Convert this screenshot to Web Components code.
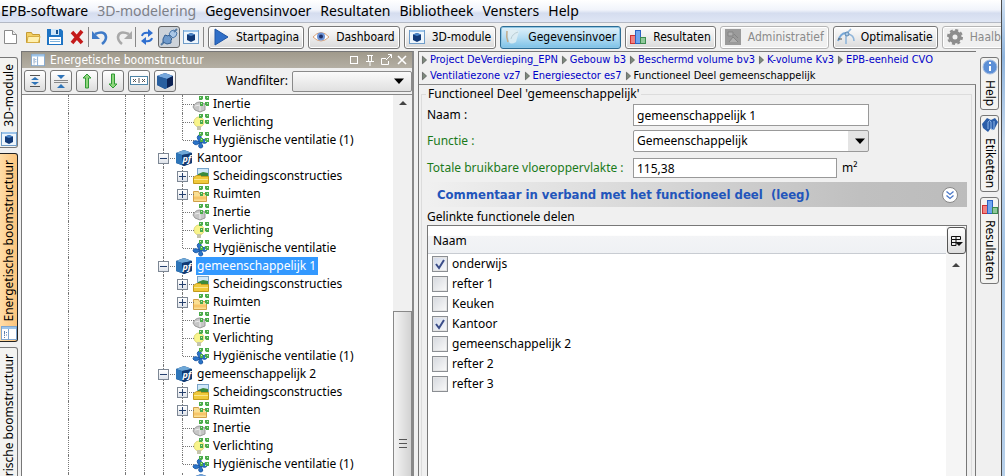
<!DOCTYPE html>
<html lang="nl">
<head>
<meta charset="utf-8">
<title>EPB-software</title>
<style>
html, body { margin: 0; height: 100%; overflow: hidden; }
body { --ui: "DejaVu Sans Condensed", "Noto Sans", sans-serif; font: 12px/16px "Noto Sans", sans-serif; color: #000; background: #f0f0f0; }
</style>
</head>
<body>
<epb-app></epb-app>
<script>
const ICONS = {
  cube: `<path d="M8 0L16 3V12L8 16L0 12V3z" fill="#1c4a8e"/><path d="M8 0L16 3L10 6L0 3z" fill="#76a7dc"/><path d="M0 3L10 6V15L8 16L0 12z" fill="#295f9f"/><path d="M10 6L16 3V12L10 15z" fill="#0c2254"/>`,
  pf: `<path d="M8 0L16 3V13L8 16L0 13V3z" fill="#174a86"/><path d="M8 0L16 3L6 5L0 3z" fill="#6ea8d8"/><path d="M0 3L6 5V15L0 13z" fill="#2e75b8"/><path d="M6 5L16 3V13L8 16L6 15z" fill="#123a72"/><text x="6.500" y="12" font-family="Noto Sans,sans-serif" font-size="9" font-weight="bold" font-style="italic" fill="#fff">pf</text>`,
  screen: `<rect x=".5" y="1.500" width="15" height="13" fill="#eef6fd" stroke="#6f9cc8"/><path d="M1 2h14" stroke="#9cc4ea" stroke-width="2"/><path d="M8 4L12 5.500V11L8 13L4 11V5.500z" fill="#123a78"/><path d="M8 4L12 5.500L8 7L4 5.500z" fill="#4c86c8"/>`,
  page: `<path d="M1.500 1.500h8l4 4v9h-12z" fill="#fff" stroke="#8a8a8a"/><path d="M9.500 1.500v4h4" fill="#eee" stroke="#8a8a8a"/>`,
  folder: `<path d="M1.500 13.500v-10h5l1 2h7v8z" fill="#f3cf62" stroke="#c49a33"/><path d="M3 7.500h12l-1.500 6H2z" fill="#fff0ae" stroke="#d7ae45"/>`,
  save: `<path d="M0 0h14l2 2v14H0z" fill="#1e74c4"/><rect x="4" y="0" width="8" height="6" fill="#cfe6f8"/><rect x="9" y="1" width="2" height="4" fill="#14508e"/><rect x="2" y="8" width="12" height="7" fill="#fff"/><path d="M3 10.500h10M3 12.500h10" stroke="#7fb3dd"/>`,
  del: `<path d="M3 3L13 14M13 2L3 14" stroke="#c41a1a" stroke-width="3.600"/>`,
  undo: `<path d="M3 5q10-4 11 3q0 4-4 7" fill="none" stroke="#3f7bc8" stroke-width="2.600"/><path d="M0 2v8h8z" fill="#3f7bc8"/>`,
  redo: `<path d="M13 5q-10-4-11 3q0 4 4 7" fill="none" stroke="#a9a9a9" stroke-width="2.600"/><path d="M16 2v8h-8z" fill="#a9a9a9"/>`,
  sync: `<path d="M3 7q1-4 7-3" fill="none" stroke="#2f6fd0" stroke-width="2"/><path d="M9 0l5 4-5 4z" fill="#2f6fd0"/><path d="M13 9q-1 4-7 3" fill="none" stroke="#2f6fd0" stroke-width="2"/><path d="M7 8l-5 4 5 4z" fill="#2f6fd0"/>`,
  plug: `<path d="M0 16L4 12" stroke="#567da8" stroke-width="2"/><path d="M2 10l2-4 3 1 1-1 3 4-1 1 0 3-4 1-4-2z" fill="#6f9acb" stroke="#345f92"/><path d="M8 5l2-3 3-1 3 3-1 3-3 2z" fill="#a9c6e6" stroke="#4a77aa"/><path d="M13 3l3-3" stroke="#567da8" stroke-width="2"/>`,
  play: `<path d="M2 0L15 8L2 16z" fill="#2f6fc8" stroke="#1f55a4"/>`,
  eye: `<path d="M0 8q8-9 16 0q-8 8-16 0z" fill="#fff" stroke="#d9a37a"/><circle cx="8" cy="7.500" r="4" fill="#6c93d6"/><circle cx="8" cy="7.500" r="2" fill="#1e2f66"/>`,
  pen: `<path d="M2 1q6-1 12 1l-3 11q-5 3-7 0z" fill="#e4eff2" opacity=".8"/><path d="M2 2q-1 6 1 11" fill="none" stroke="#c2ab8a" stroke-width="1.500"/><path d="M6 10q1-5 7-7" fill="none" stroke="#b9cdd4"/>`,
  bars: `<rect x=".5" y="6.500" width="5" height="8" fill="#f08080" stroke="#cc3333"/><rect x="5.500" y="1.500" width="5" height="13" fill="#6ea6f0" stroke="#2a62c4"/><rect x="10.500" y="8.500" width="5" height="6" fill="#8fc99a" stroke="#3b8a4e"/>`,
  admin: `<path d="M0 0h16v16H0z" fill="#9a9a9a"/><path d="M3 3h5v4H3zM9 5l4 4M4 13l4-5 5 5" fill="#b0b0b0" stroke="#858585"/>`,
  opt: `<path d="M0 12q3-9 9-8" fill="none" stroke="#77a8d8" stroke-width="2"/><path d="M8 15V5l5-5M10 5q6 1 6 7" fill="none" stroke="#90b6da" stroke-width="1.600"/><circle cx="9" cy="5" r="2" fill="#a9c9e6" stroke="#5d87b0"/><path d="M0 10h4" stroke="#555"/>`,
  gear: `<circle cx="8" cy="8" r="4.500" fill="none" stroke="#8d8d8d" stroke-width="4"/><circle cx="8" cy="8" r="7" fill="none" stroke="#8d8d8d" stroke-width="2" stroke-dasharray="3 2.500"/>`,
  panel: `<rect x=".5" y="1.500" width="15" height="13" fill="#fff" stroke="#7fa6cf"/><path d="M1 3h14" stroke="#9cc4ea" stroke-width="2"/><path d="M7.500 4v10" stroke="#7fa6cf"/><path d="M3.500 6v7M3 7.500h3M3 10h3" stroke="#5a7fae" stroke-dasharray="1 1"/>`,
  expand: `<path d="M3 2.500h10M3 13.500h10" stroke="#555"/><path d="M8 4l4 3H4zM8 12l4-3H4z" fill="#2f74b8"/>`,
  collapse: `<path d="M1 7.500h14M1 9.500h14" stroke="#888"/><path d="M4 2h8L8 6zM4 15h8l-4-4z" fill="#2f74b8"/>`,
  up: `<path d="M8 1l4 4H9.500v10h-3V5H4z" fill="#8ed67c" stroke="#2f9a35"/>`,
  down: `<path d="M8 15l4-4H9.500V1h-3v10H4z" fill="#8ed67c" stroke="#2f9a35"/>`,
  rename: `<rect x="-.5" y="3.500" width="17" height="8" fill="#fff" stroke="#4d84a6"/><path d="M2 6l3 3M5 6L2 9M8 5v5M11 6l3 3M14 6l-3 3" stroke="#555"/>`,
  info: `<circle cx="8" cy="8" r="7" fill="#5c8fd6" stroke="#a5bde0"/><path d="M8 7v5M8 3v2" stroke="#fff" stroke-width="2"/>`,
  label: `<path d="M0 7l5-6 4 2v8l-3 4-5-4zM9 3l4-2 3 4-4 8-4-2z" fill="#2a5da8"/><path d="M6 12V5q2-3 3 0v7q3 2 3-2V4" fill="none" stroke="#8db6e8"/>`,
  max: `<rect x="4.500" y="4.500" width="7" height="7" fill="none" stroke="#fff"/>`,
  pin: `<path d="M5 3.500h6M6.500 4v5M9.500 4v5M4 9.500h8M8 10v4" fill="none" stroke="#fff"/>`,
  float: `<path d="M8 6.500H3.500v6h7V9M8 8l5-5M10 2.500h3.500V6" fill="none" stroke="#fff"/>`,
  close: `<path d="M4 4l8 8M12 4l-8 8" stroke="#fff" stroke-width="1.600"/>`,
  arrow: `<path d="M3 5.500h10L8 11z" fill="#000"/>`,
  scrollup: `<path d="M4 10h8L8 6z" fill="#444"/>`,
  crumb: `<path d="M5 2.500v11l6-5.500z" fill="#7c8a7c" stroke="#4d4d4d"/>`,
  chevrons: `<circle cx="8" cy="8" r="7.500" fill="#fff" stroke="#888"/><path d="M4.500 4.500L8 7.500l3.500-3M4.500 8.500L8 11.500l3.500-3" fill="none" stroke="#4a78c8" stroke-width="1.300"/>`,
  columns: `<path d="M3.500 3.500h9v3h-9zM3.500 6.500v6H8M8 3.500v9M4 9.500h4" fill="none" stroke="#111"/><path d="M7 9h8l-4 4z" fill="#111"/>`,
  scheiding: `<rect x="4.500" y=".5" width="11" height="11" fill="#cfe7f8" stroke="#7aa4c8"/><path d="M5 6l5-2 5 1v4H5z" fill="#3b8a3b"/><path d="M.500 15.500v-6l3-2h4l1 1h7v7z" fill="#f0c93a" stroke="#c29a1c"/><path d="M1 11.500h14" stroke="#fbe68c"/>`,
  ruimten: `<path d="M.500 15.500v-10h5l1 2h7v8z" fill="#fbdf92" stroke="#d0a04a"/><path d="M1 12h12" stroke="#f6c56a" stroke-width="3"/>`,
  inertie: `<path d="M0 11q2-5 7-5l5 2v6l-5 2-5-2z" fill="#c6c6c6" stroke="#9a9a9a"/><path d="M2 10l5-1v6" fill="none" stroke="#ececec"/>`,
  licht: `<circle cx="6" cy="8" r="5" fill="#f8f48a" stroke="#e0d878"/><rect x="4" y="12" width="4" height="4" fill="#c4c4ac"/>`,
  vent: `<circle cx="7" cy="10" r="2" fill="#1f5ba8"/><path d="M7 10q-5-5-1-7q4 1 1 7q5-5 7-1q0 4-7 1q5 5 1 6q-4 0-1-6q-4 5-7 1q0-4 7-1" fill="#2a74c8" stroke="#1f5ba8"/>`
};
const LEAF = `<path d="M6 0h4v4H6zM12 0h4v4h-4zM7 6h3v4H7zM12 6h4v4h-4z" fill="#4bab4b"/><path d="M7 1h1v1H7zM14 1h1v1h-1zM14 7h1v1h-1zM8 7h1v1H8zM9 3h1v1H9zM12 3h1v1h-1zM12 9h1v1h-1z" fill="#c4ecc0"/>`;
for (const n of ['ruimten', 'inertie', 'licht', 'vent']) ICONS[n] += LEAF;

function define(name, html) {
  customElements.define(name, class extends HTMLElement {
    constructor() {
      super();
      this.attachShadow({ mode: 'open' });
    }
    connectedCallback() {
      this.shadowRoot.innerHTML = typeof html === 'function' ? html(this) : html;
    }
  });
}

define('ui-icon', el => `<style>:host{display:inline-block;flex:none;width:16px;height:16px}svg{display:block;width:100%;height:100%;overflow:visible}</style>
<svg viewBox="0 0 16 16" aria-hidden="true">${ICONS[el.getAttribute('name')] || ''}</svg>`);

define('menu-bar', `<style>
:host{display:block;font-size:14px;line-height:22px;background:linear-gradient(#fff,#f1f4fb 45%,#d5ddef 60%,#dfe6f5);border-bottom:1px solid #b4b9c4}
nav{display:flex;gap:9px;padding:0 1px;white-space:nowrap}
button{all:unset}button:disabled{color:#7d8088}
</style><nav><button>EPB-software</button><button disabled>3D-modelering</button><button>Gegevensinvoer</button><button>Resultaten</button><button>Bibliotheek</button><button>Vensters</button><button>Help</button></nav>`);

define('icon-button', el => `<style>
:host{display:block;flex:none}
button{display:flex;align-items:center;justify-content:center;box-sizing:border-box;width:22px;height:22px;padding:0;border:0;background:none}
:host([boxed]) button{border:1px solid #777;border-radius:3px;background:linear-gradient(#fff,#eee 50%,#dcdcdc)}
:host([pressed]) button{border:1px solid #666;border-radius:3px;background:#cdd3da}
</style><button aria-label="${el.getAttribute('label')}"><ui-icon name="${el.getAttribute('icon')}"></ui-icon></button>`);

define('module-button', el => `<style>
:host{display:block;flex:none}
button{display:flex;align-items:center;gap:7px;box-sizing:border-box;height:23px;padding:0 4px;font:12px/16px var(--ui);color:#000;white-space:nowrap;border:1px solid #777;border-radius:3px;background:linear-gradient(#fcfcfc,#ececec 50%,#dadada);box-shadow:inset 0 0 0 1px #fff}
:host([active]) button{border-color:#2c6c94;background:linear-gradient(#e0f1fa,#b4dcf2 50%,#7cc2e8);box-shadow:inset 0 0 0 1px #8fc6e4}
button:disabled{color:#8a8a8a;border-color:#b5b5b5;background:#f0f0f0}
</style><button ${el.hasAttribute('disabled') ? 'disabled' : ''}><ui-icon name="${el.getAttribute('icon')}"></ui-icon><slot></slot></button>`);

define('tool-strip', `<style>
:host{display:flex;align-items:center;height:28px;gap:4px;overflow:hidden;background:#f0f0f0}
.tools{display:flex;flex:none;align-items:center}
.sep{width:1px;height:20px;background:#888}
.wide{margin-right:2px}
.last{margin-left:1px}
</style><div class="tools">
<icon-button icon="page" label="Nieuw"></icon-button><icon-button icon="folder" label="Openen"></icon-button><icon-button icon="save" label="Bewaren"></icon-button><icon-button icon="del" label="Verwijderen"></icon-button><span class="sep"></span>
<icon-button class="wide" icon="undo" label="Ongedaan maken"></icon-button><icon-button icon="redo" label="Opnieuw"></icon-button><span class="sep"></span>
<icon-button icon="sync" label="Vernieuwen"></icon-button><icon-button icon="plug" pressed label="Koppeling"></icon-button><icon-button icon="screen" label="3D-venster"></icon-button><span class="sep last"></span></div>
<module-button icon="play">Startpagina</module-button><module-button icon="eye">Dashboard</module-button><module-button icon="screen">3D-module</module-button><module-button icon="pen" active>Gegevensinvoer</module-button><module-button icon="bars">Resultaten</module-button><module-button icon="admin" disabled>Administratief</module-button><module-button icon="opt">Optimalisatie</module-button><module-button icon="gear" disabled>Haalbaarheid</module-button>`);

define('side-tab', el => `<style>
:host{display:block;flex:none}
button{display:flex;flex-direction:column;align-items:center;gap:5px;box-sizing:border-box;width:19px;padding:1px 0 3px;font:inherit;line-height:16px;color:#000;border:1px solid #777;border-radius:3px;background:#f3f3f1;white-space:nowrap}
span{writing-mode:vertical-rl}
:host([left]) button{width:18px;border-left:0;border-radius:0 3px 3px 0;padding:6px 0 0;gap:4px}
:host([left]) span{transform:rotate(180deg)}
:host([left]) ui-icon{order:1}
:host([active]) button{background:linear-gradient(90deg,#ffdca6,#fbc47c);border-color:#222}
</style><button><ui-icon name="${el.getAttribute('icon')}"></ui-icon><span><slot></slot></span></button>`);

define('tree-row', el => {
  const kind = el.getAttribute('kind'), branch = el.getAttribute('toggle'), node = kind === 'pf';
  const line = '<i class="v"></i>', gap = '<i></i>';
  const sign = branch ? `<button aria-label="${branch === '+' ? 'Uitvouwen' : 'Invouwen'}"><svg viewBox="0 0 9 9"><path d="M1 4.500h7${branch === '+' ? 'M4.500 1v7' : ''}" stroke="#25406e" fill="none"/></svg></button>` : '';
  const join = `<i class="v h${el.hasAttribute('last') ? ' end' : ''}">${sign}</i>`;
  return `<style>
:host{display:flex;align-items:center;height:18px;white-space:nowrap}
i{position:relative;flex:none;width:19px;height:18px;display:flex;align-items:center;justify-content:center}
.v::before{content:"";position:absolute;left:9px;top:0;bottom:0;border-left:1px dotted #777}
.end::before{bottom:9px}
.h::after{content:"";position:absolute;left:10px;right:-2px;top:9px;border-top:1px dotted #777}
i button{position:relative;z-index:1;box-sizing:border-box;width:11px;height:11px;padding:0;border:1px solid #7d8794;background:linear-gradient(#fff,#dfe3ea)}
svg{display:block;width:9px;height:9px}
ui-icon{margin:0 ${node ? 4 : 3}px 0 ${node ? 3 : 1}px}
span{padding:0 2px 0 1px;line-height:18px}
:host([selected]) span{background:#3399ff;color:#fff}
</style>${line}${gap}${gap}${line}${line}${node ? join : line + join}<ui-icon name="${kind}"></ui-icon><span><slot></slot></span>`;
});

define('tree-panel', () => {
  const tail = suffix => `<tree-row kind="inertie">Inertie</tree-row><tree-row kind="licht">Verlichting</tree-row><tree-row kind="vent" last>Hygiënische ventilatie${suffix}</tree-row>`;
  const kids = suffix => `<tree-row kind="scheiding" toggle="+">Scheidingsconstructies</tree-row><tree-row kind="ruimten" toggle="+">Ruimten</tree-row>` + tail(suffix);
  return `<style>
:host{display:flex;flex-direction:column;box-sizing:border-box;min-height:0;border:1px solid #777;border-bottom:0;border-right:2px solid #888;background:#f0f0f0}
header{display:flex;align-items:center;height:16px;padding:0 2px 0 8px;color:#fff;background:linear-gradient(#a09a8c,#b4afa4)}
h2{flex:1;margin:0 0 0 4px;font:12px/16px var(--ui)}
header ui-icon{height:14px}
header icon-button{width:16px;display:flex;justify-content:center}
.bar{display:flex;align-items:center;gap:4px;height:26px;padding-left:2px;border-bottom:1px solid #888}
label{margin-left:auto}
.combo{position:relative;display:flex;width:120px}
select{appearance:none;box-sizing:border-box;width:100%;height:21px;border:1px solid #8a8a8a;border-radius:2px;background:linear-gradient(#fafafa,#e0e0e0)}
.combo ui-icon{position:absolute;right:5px;top:2px;pointer-events:none}
.body{flex:1;display:flex;min-height:0;background:#fff}
.tree{flex:1;overflow:hidden;padding-left:37px}
.scroll{display:flex;flex-direction:column;width:19px;background:#f0f0f0}
.scroll ui-icon{align-self:center}
.thumb{display:flex;flex:1;justify-content:center;align-items:center;margin-top:200px;box-sizing:border-box;border:1px solid #888;border-bottom:0;background:linear-gradient(90deg,#f4f4f4,#d2d2d2)}
.thumb::before{content:"";width:8px;height:9px;margin-top:98px;background:repeating-linear-gradient(#555 0 1px,transparent 1px 4px)}
</style><header><ui-icon name="panel"></ui-icon><h2>Energetische boomstructuur</h2><icon-button icon="max" label="Maximaliseren"></icon-button><icon-button icon="pin" label="Vastzetten"></icon-button><icon-button icon="float" label="Losmaken"></icon-button><icon-button icon="close" label="Sluiten"></icon-button></header>
<div class="bar"><icon-button boxed icon="expand" label="Uitvouwen"></icon-button><icon-button boxed icon="collapse" label="Invouwen"></icon-button><icon-button boxed icon="up" label="Omhoog"></icon-button><icon-button boxed icon="down" label="Omlaag"></icon-button><icon-button boxed icon="rename" label="Hernoemen"></icon-button><icon-button boxed icon="cube" label="3D"></icon-button>
<label for="wand">Wandfilter:</label><div class="combo"><select id="wand"><option></option></select><ui-icon name="arrow"></ui-icon></div></div>
<div class="body"><div class="tree">${tail(' (1)')}
<tree-row kind="pf" toggle="-">Kantoor</tree-row>${kids('')}
<tree-row kind="pf" toggle="-" selected>gemeenschappelijk 1</tree-row>${kids(' (1)')}
<tree-row kind="pf" toggle="-">gemeenschappelijk 2</tree-row>${kids(' (1)')}
<tree-row kind="cube" toggle="-"></tree-row></div>
<div class="scroll"><ui-icon name="scrollup"></ui-icon><div class="thumb"></div></div></div>`;
});

define('crumb-trail', `<style>
:host{display:block;border-bottom:1px solid #888;font:11px/16px var(--ui)}
ol{display:flex;flex-wrap:wrap;margin:0;padding:0;list-style:none}
li{display:flex;align-items:center;margin-right:1px;white-space:nowrap}
ui-icon{width:11px;height:16px}
a{color:#0000c8;text-decoration:none}
.brk{flex-basis:100%;height:0;margin:0}
</style><ol><li><ui-icon name="crumb"></ui-icon><a href="#">Project DeVerdieping_EPN</a></li><li><ui-icon name="crumb"></ui-icon><a href="#">Gebouw b3</a></li><li><ui-icon name="crumb"></ui-icon><a href="#">Beschermd volume bv3</a></li><li><ui-icon name="crumb"></ui-icon><a href="#">K-volume Kv3</a></li><li><ui-icon name="crumb"></ui-icon><a href="#">EPB-eenheid CVO</a></li><li class="brk"></li><li><ui-icon name="crumb"></ui-icon><a href="#">Ventilatiezone vz7</a></li><li><ui-icon name="crumb"></ui-icon><a href="#">Energiesector es7</a></li><li><ui-icon name="crumb"></ui-icon>Functioneel Deel gemeenschappelijk</li></ol>`);

define('linked-parts', () => {
  const parts = [['onderwijs', 1], ['refter 1'], ['Keuken'], ['Kantoor', 1], ['gemeenschappelijk 2'], ['refter 2'], ['refter 3']];
  return `<style>
:host{display:flex;min-height:0;border:1px solid #777;border-bottom:0;background:#fff}
table{flex:1;align-self:flex-start;display:table;border-collapse:collapse}
th{box-sizing:border-box;height:27px;padding:4px 5px 0;text-align:left;font-weight:normal;border-bottom:1px solid #c8ccd2;background:linear-gradient(#fff 35%,#f3f4f6 36%,#eff1f4)}
td{height:20px;padding:0 4px}
label{display:flex;align-items:center;gap:4px;height:20px}
input{appearance:none;flex:none;box-sizing:border-box;width:16px;height:16px;margin:0;border:1px solid #8b8e93;outline:1px solid #e4e4e4;outline-offset:-2px;background:linear-gradient(135deg,#d5d8de,#fafafa)}
input:checked{background:no-repeat center/12px url("data:image/svg+xml,%3Csvg xmlns='http://www.w3.org/2000/svg' viewBox='0 0 12 12'%3E%3Cpath d='M2 6l3 4 5-8' fill='none' stroke='%233b4d88' stroke-width='2'/%3E%3C/svg%3E"),linear-gradient(135deg,#d0d8ea,#fafafa)}
aside{display:flex;flex-direction:column;align-items:center;width:20px;background:#f5f5f5}
button{box-sizing:border-box;width:19px;height:27px;margin-top:1px;padding:0;border:1px solid #555;border-radius:3px;background:linear-gradient(#fff,#ddd)}
button ui-icon{display:block}
aside > ui-icon{margin-top:3px}
</style><table><thead><tr><th scope="col">Naam</th></tr></thead><tbody>${parts.map(([n, on], i) => `<tr><td><label for="p${i}"><input type="checkbox" id="p${i}" ${on ? 'checked' : ''}>${n}</label></td></tr>`).join('')}</tbody></table>
<aside><button aria-label="Kolommen"><ui-icon name="columns"></ui-icon></button><ui-icon name="scrollup"></ui-icon></aside>`;
});

define('part-form', `<style>
:host{display:flex;flex-direction:column;box-sizing:border-box;min-width:0;border:1px solid #777;border-bottom:0;border-right:0;background:#f0f0f0}
.area{flex:1;display:flex;min-height:0;padding:1px 3px 0 2px;border-right:1px solid #777}
fieldset{flex:1;display:flex;flex-direction:column;min-width:0;margin:0;padding:2px 4px 0 5px;border:1px solid #dcdcdc;border-bottom:0}
legend{padding:0 2px;margin-left:-1px;line-height:16px}
.grid{display:grid;grid-template-columns:206px 236px 1fr;row-gap:4px;align-items:center}
.green{color:#1a7a1a}
.combo{position:relative;display:flex}
input,select{appearance:none;box-sizing:border-box;width:100%;height:22px;margin:0;padding:0 3px;font:inherit;color:#000;border:1px solid #999;border-radius:0;background:#fff}
select{border-radius:2px;background:linear-gradient(90deg,transparent calc(100% - 20px),#e4e4e4 0),#fff}
.combo ui-icon{position:absolute;right:1px;top:3px;pointer-events:none}
.area-row{display:flex;align-items:center;gap:5px;grid-column:2 / 4;height:24px}
.area-row input{width:204px;height:20px}
.comment{display:flex;align-items:center;justify-content:space-between;height:25px;margin-top:2px;padding:0 9px 0 10px;color:#2255bb;background:linear-gradient(90deg,#f0f0f0,#c0c0c0 80%,#bcbcbc)}
h3{margin:0;font:bold 13px/16px var(--ui);white-space:pre}
.sub{margin:2px 0 0;line-height:16px}
linked-parts{flex:1}
</style><crumb-trail></crumb-trail><div class="area"><fieldset><legend>Functioneel Deel 'gemeenschappelijk'</legend>
<div class="grid"><label for="naam">Naam :</label><input id="naam" value="gemeenschappelijk 1"><span></span>
<label for="functie" class="green">Functie :</label><div class="combo"><select id="functie"><option>Gemeenschappelijk</option></select><ui-icon name="arrow"></ui-icon></div><span></span>
<label for="opp" class="green">Totale bruikbare vloeroppervlakte :</label><div class="area-row"><input id="opp" value="115,38"><span>m²</span></div></div>
<div class="comment"><h3>Commentaar in verband met het functioneel deel  (leeg)</h3><ui-icon name="chevrons"></ui-icon></div>
<p class="sub">Gelinkte functionele delen</p><linked-parts></linked-parts></fieldset></div>`);

define('epb-app', `<style>
:host{display:flex;height:100vh;overflow:hidden}
.window{flex:1;display:flex;flex-direction:column;min-width:0}
.edge{width:4px;border-left:1px solid #4d4d4d;box-sizing:border-box;background:linear-gradient(#cfe0f2,#8fb4dc 12%,#c6d9ee 30%,#9dbfe2 55%,#b7d0ea)}
.work{flex:1;display:flex;min-height:0}
tree-panel{flex:0 0 393px}
part-form{flex:1;margin-left:4px}
.rail{display:flex;flex-direction:column;gap:5px;flex:none;width:21px;padding-top:6px;box-sizing:border-box;overflow:hidden}
.right{width:25px;padding-left:4px}
</style><div class="window"><menu-bar></menu-bar><tool-strip></tool-strip><div class="work">
<div class="rail"><side-tab left icon="screen">3D-module</side-tab><side-tab left active icon="panel">Energetische boomstructuur</side-tab><side-tab left icon="panel">Geometrische boomstructuur</side-tab></div>
<tree-panel></tree-panel><part-form></part-form>
<div class="rail right"><side-tab icon="info">Help</side-tab><side-tab icon="label">Etiketten</side-tab><side-tab icon="bars">Resultaten</side-tab></div></div></div><div class="edge"></div>`);
</script>
</body>
</html>
